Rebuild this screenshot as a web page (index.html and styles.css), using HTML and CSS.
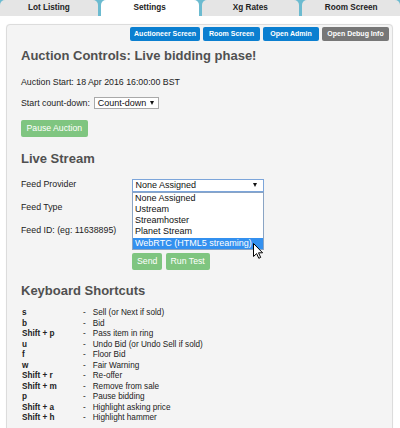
FILE: index.html
```html
<!DOCTYPE html>
<html>
<head>
<meta charset="utf-8">
<link rel="stylesheet" href="styles.css">
</head>
<body>
<nav class="tabs">
  <div class="tab">Lot Listing</div>
  <div class="tab active">Settings</div>
  <div class="tab">Xg Rates</div>
  <div class="tab">Room Screen</div>
</nav>
<main class="panel">
  <div class="toolbar">
    <span class="tbtn w-auct">Auctioneer Screen</span>
    <span class="tbtn w-room">Room Screen</span>
    <span class="tbtn w-admin">Open Admin</span>
    <span class="tbtn w-debug grey">Open Debug Info</span>
  </div>
  <h2 class="heading h-controls">Auction Controls: Live bidding phase!</h2>
  <p class="line">Auction Start: 18 Apr 2016 16:00:00 BST</p>
  <div class="countdown">
    <span>Start count-down:</span>
    <span class="select sm"><span>Count-down</span><span class="caret"></span></span>
  </div>
  <button class="gbtn pause">Pause Auction</button>

  <h2 class="heading h-live">Live Stream</h2>
  <div class="form">
    <div class="frow">
      <span class="flabel">Feed Provider</span>
      <div class="fctrl">
        <div class="select lg focus"><span>None Assigned</span><span class="caret"></span></div>
        <ul class="dropdown">
          <li>None Assigned</li>
          <li>Ustream</li>
          <li>Streamhoster</li>
          <li>Planet Stream</li>
          <li class="sel">WebRTC (HTML5 streaming)</li>
          <li class="cursor"><svg width="11" height="16" viewBox="0 0 11 16"><path d="M0.5 0.5 L0.5 13.5 L3.6 10.6 L5.8 15.3 L7.7 14.4 L5.5 9.8 L9.6 9.8 Z" fill="#fff" stroke="#000" stroke-width="1" stroke-linejoin="round"/></svg></li>
        </ul>
      </div>
    </div>
    <div class="frow">
      <span class="flabel">Feed Type</span>
      <div class="fctrl"></div>
    </div>
    <div class="frow">
      <span class="flabel">Feed ID: (eg: 11638895)</span>
      <div class="fctrl"></div>
    </div>
    <div class="actions">
      <button class="gbtn">Send</button>
      <button class="gbtn">Run Test</button>
    </div>
  </div>

  <h2 class="heading h-keys">Keyboard Shortcuts</h2>
  <div class="shortcuts">
    <b>s</b><span>-</span><span>Sell (or Next if sold)</span>
    <b>b</b><span>-</span><span>Bid</span>
    <b>Shift + p</b><span>-</span><span>Pass item in ring</span>
    <b>u</b><span>-</span><span>Undo Bid (or Undo Sell if sold)</span>
    <b>f</b><span>-</span><span>Floor Bid</span>
    <b>w</b><span>-</span><span>Fair Warning</span>
    <b>Shift + r</b><span>-</span><span>Re-offer</span>
    <b>Shift + m</b><span>-</span><span>Remove from sale</span>
    <b>p</b><span>-</span><span>Pause bidding</span>
    <b>Shift + a</b><span>-</span><span>Highlight asking price</span>
    <b>Shift + h</b><span>-</span><span>Highlight hammer</span>
  </div>
</main>
</body>
</html>
```
FILE: styles.css
```css
* { box-sizing: border-box; }

body {
  margin: 0;
  font-family: "Liberation Sans", Arial, sans-serif;
  font-size: 8.8px;
  color: #222;
  background: #fff;
}

.tabs {
  display: grid;
  grid-template-columns: repeat(4, 1fr);
  column-gap: 3px;
  height: 16px;
  background: #6cbbd0;
}

.tab {
  background: #e5e5e5;
  border-radius: 5px 5px 0 0;
  font-weight: bold;
  font-size: 8.2px;
  line-height: 15px;
  text-align: center;
  color: #222;
}

.tab.active { background: #fff; }

.panel {
  margin: 8px 7px 0 6px;
  min-height: 420px;
  padding: 2px 3px 20px 14px;
  background: #f4f4f4;
  border: 1px solid #dcdcdc;
  border-radius: 4px;
  box-shadow: 0 0 1px rgba(0, 0, 0, 0.08);
}

.toolbar {
  display: flex;
  justify-content: flex-end;
  gap: 3px;
}

.tbtn {
  height: 14px;
  line-height: 14px;
  text-align: center;
  background: #0b7fd0;
  color: #fff;
  font-weight: bold;
  font-size: 7px;
  border-radius: 2px;
  white-space: nowrap;
}

.tbtn.grey { background: #777; }
.w-auct { width: 70px; }
.w-room { width: 57px; }
.w-admin { width: 56px; }
.w-debug { width: 67px; }

.heading {
  margin: 0;
  font-size: 13px;
  line-height: 15px;
  font-weight: bold;
  color: #505050;
}

.h-controls { margin-top: 7px; }
.h-live { margin-top: 14px; }
.h-keys { margin-top: 12.7px; }

.line {
  margin: 14px 0 0;
  line-height: 11px;
}

.countdown {
  display: flex;
  align-items: center;
  gap: 4px;
  margin-top: 9px;
  line-height: 11px;
}

.select {
  display: flex;
  align-items: center;
  justify-content: space-between;
  height: 12.4px;
  background: #fff;
  border: 1px solid #a9a9a9;
  font-size: 9px;
  line-height: 10px;
  color: #111;
}

.select.sm {
  width: 65px;
  padding: 0 4px 0 2.7px;
}

.select.lg {
  width: 132px;
  padding: 0 6px 0 2.5px;
}

.select.focus { border-color: #7ca5da; }

.caret {
  width: 0;
  height: 0;
  border-left: 2.6px solid transparent;
  border-right: 2.6px solid transparent;
  border-top: 4px solid #111;
}

.gbtn {
  height: 17px;
  padding: 0 5.5px;
  background: #7fc580;
  color: #fff;
  border: 0;
  border-radius: 2px;
  font: 8.7px "Liberation Sans", Arial, sans-serif;
}

.pause { margin-top: 10.5px; display: block; }

.form { margin-top: 13.3px; }

.frow {
  display: flex;
  align-items: flex-start;
  height: 12.4px;
  margin-bottom: 10.3px;
}

.flabel {
  width: 111px;
  line-height: 11px;
}

.fctrl {
  position: relative;
  width: 132px;
}

.dropdown {
  position: absolute;
  top: 100%;
  left: 0;
  z-index: 2;
  width: 132px;
  margin: 0;
  padding: 0;
  list-style: none;
  background: #fff;
  border: 1px solid #8aa4c4;
  font-size: 9px;
  color: #111;
}

.dropdown li {
  height: 11.3px;
  line-height: 11.3px;
  padding-left: 2px;
  white-space: nowrap;
}

.dropdown li.sel {
  background: #3390ef;
  color: #fff;
}

.dropdown li.cursor {
  position: absolute;
  left: 120px;
  top: 50px;
  height: auto;
  padding: 0;
  line-height: 0;
}

.actions {
  display: flex;
  gap: 3.3px;
  margin-left: 111px;
  margin-top: 15.9px;
}

.actions .gbtn { padding: 0 5px; }

.shortcuts {
  display: grid;
  grid-template-columns: 62px 9.7px auto;
  margin-top: 10.5px;
  font-size: 8.2px;
  line-height: 10.5px;
}

.shortcuts b { padding-left: 1px; }
```
